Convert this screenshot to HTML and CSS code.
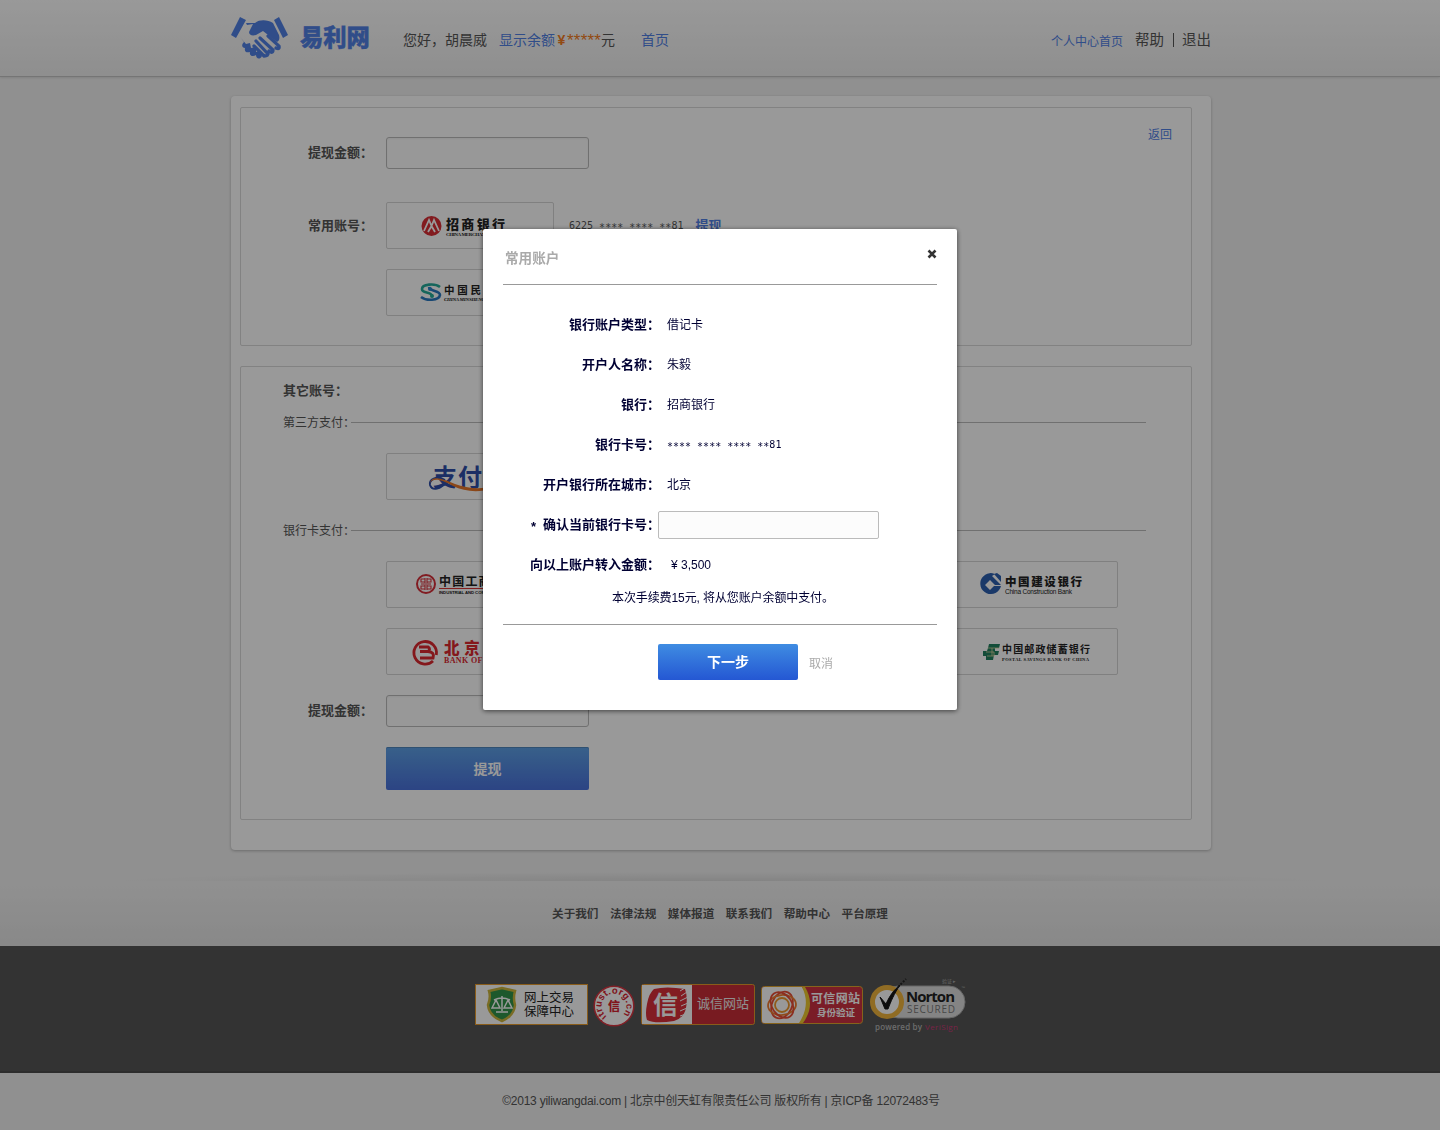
FILE: index.html
```html
<!DOCTYPE html>
<html lang="zh-CN">
<head>
<meta charset="utf-8">
<title>易利网</title>
<link rel="stylesheet" href="styles.css">
</head>
<body>
<header class="header">
  <div class="header-inner">
    <svg class="mark" width="58" height="44" viewBox="0 0 58 44">
      <path d="M9 1L15 4L5 22L0 19ZM48 1L43 4L52 22L57 19Z"/>
      <path d="M15 7L24 7C29 3 37 4 42 7L48 19C49 23 48 25 46 26L32 15L25 19C21 20 18 19 18 16L22 8L16 9Z"/>
      <path d="M9 21L13 26C10 29 11 32 14 32C13 36 16 37 19 36C18 40 22 41 25 39C25 43 29 44 31 40L28 35L25 36L25 31L20 32L19 27L15 28Z"/>
      <path class="fingers" d="M29 22L42 34M25 25L37 38M23 30L33 40M37 20L48 30Q49 34 45 32M42 34Q42 38 38 35M37 38Q36 41 32 39"/>
    </svg>
    <span class="brand">易利网</span>
    <span class="hello">您好，胡晨威</span>
    <span class="balance"><a>显示余额</a><b>¥</b><i>*****</i>元</span>
    <a class="home">首页</a>
    <nav class="user-nav"><a>个人中心首页</a><span>帮助</span><span class="bar"></span><span>退出</span></nav>
  </div>
</header>

<main class="sheet">
  <section class="box">
    <div class="row first"><span class="label">提现金额<em>：</em></span><span class="input"></span><a class="back">返回</a></div>
    <div class="row common"><span class="label">常用账号<em>：</em></span>
      <span class="card"><svg width="166" height="45" viewBox="0 0 166 45">
        <circle class="red" cx="44.5" cy="23" r="10"/><path class="cut" d="M37 28L42 17L44.5 23L47 17L52 28M41 29L44.5 23L48 29"/>
        <text class="kai" x="59" y="26" font-size="13" textLength="59">招商银行</text>
        <text class="rom" x="59" y="33" font-size="5" textLength="59">CHINA MERCHANTS BANK</text></svg></span>
      <span class="number">6225 <s>**** ****</s> <s>**</s>81</span><a class="take">提现</a></div>
    <div class="row second"><span class="label"></span>
      <span class="card"><svg width="166" height="45" viewBox="0 0 166 45">
        <path class="teal" d="M53 17C48 13 35 14 35 19C35 24 44 21 45 26"/><path class="sky" d="M34 27C39 31 52 31 53 25C53 20 43 22 42 17"/><circle cx="43" cy="19" r="2" fill="#2a86c8"/><circle cx="45" cy="26" r="2" fill="#25aa99"/>
        <text class="kai light" x="57" y="23.5" font-size="10.5" textLength="77">中国民生银行</text>
        <text class="rom slant" x="57" y="30.5" font-size="5" textLength="77">CHINA MINSHENG BANKING CORP.</text></svg></span></div>
  </section>

  <section class="box other">
    <h2>其它账号<em>：</em></h2>
    <div class="divider"><span>第三方支付<em>：</em></span><hr></div>
    <div class="cards">
      <span class="card"><svg width="166" height="45" viewBox="0 0 166 45">
        <text x="46" y="32" font-size="24" font-weight="700" fill="#2e4ea8" textLength="74">支付宝</text>
        <path d="M58 26C49 21 42 26 43 31C45 37 54 36 59 27" fill="none" stroke="#2e4ea8" stroke-width="2"/><path d="M43 29C45 20 58 26 68 30C84 36 103 36 120 27C104 39 82 40 66 32C56 26 46 23 43 29Z" fill="#e8772a"/></svg></span>
    </div>
    <div class="divider"><span>银行卡支付<em>：</em></span><hr></div>
    <div class="cards">
      <span class="card"><svg width="166" height="45" viewBox="0 0 166 45">
        <circle class="redline" cx="39" cy="22" r="9"/><path class="redline thin" d="M38 17H34V20H38M38 24H34V27H38M40 17H44V20H40M40 24H44V27H40M38 16V21M40 16V21M38 23V28M40 23V28M34 22H44"/>
        <text x="52" y="23.5" font-size="12" font-weight="700" textLength="78">中国工商银行</text><path d="M52 26.5H130" stroke="#d33"/>
        <text class="tiny" x="52" y="32" font-size="4.3" textLength="78">INDUSTRIAL AND COMMERCIAL BANK</text></svg></span>
      <span class="card"></span>
      <span class="card"></span>
      <span class="card"><svg width="166" height="45" viewBox="0 0 166 45">
        <path d="M47 14A10.5 10.5 0 1 0 50 24H43L39 28L34 23L39 18L44 23H50L41 14L44 12Z" fill="#2c5faf"/><path d="M43 12L50 20V14L46 11Z" fill="#2c5faf"/>
        <text x="54" y="24" font-size="11.5" font-weight="900" textLength="77">中国建设银行</text>
        <text x="54" y="31.5" font-size="6.5" textLength="67">China Construction Bank</text></svg></span>
      <span class="card"><svg width="166" height="45" viewBox="0 0 166 45">
        <path d="M46 32A11.3 11.3 0 1 1 49.3 26" fill="none" stroke="#dc2830" stroke-width="2.8"/><path d="M32 18H41Q44 20 41 22.5H33M41 22.5Q48 23 46 29H33" fill="none" stroke="#dc2830" stroke-width="3"/>
        <text class="kai crimson" x="57" y="24.5" font-size="15.5" textLength="76">北京银行</text>
        <text class="rom crimson" x="57" y="34" font-size="8" textLength="76">BANK OF BEIJING</text></svg></span>
      <span class="card"></span>
      <span class="card"></span>
      <span class="card"><svg width="166" height="45" viewBox="0 0 166 45">
        <path d="M38 15H49L48 19H44V22H48L47 26H43L42 31H35V27H32V22H36L37 19Z" fill="#218060"/><path d="M37 19H48M35 23H43V27H36M41 19V27" fill="none" stroke="#d8d6a0" stroke-width=".8"/>
        <text class="kai light" x="51" y="24" font-size="10" textLength="88">中国邮政储蓄银行</text>
        <text class="rom" x="51" y="31.5" font-size="4.5" textLength="87">POSTAL SAVINGS BANK OF CHINA</text></svg></span>
    </div>
    <div class="row amount"><span class="label">提现金额<em>：</em></span><span class="input"></span></div>
    <button class="withdraw">提现</button>
  </section>
</main>

<footer>
  <div class="shade"></div>
  <nav class="links"><a>关于我们</a><a>法律法规</a><a>媒体报道</a><a>联系我们</a><a>帮助中心</a><a>平台原理</a></nav>
  <div class="badges">
    <svg width="113" height="41" viewBox="0 0 113 41"><rect x=".5" y=".5" width="112" height="40" fill="#fff" stroke="#e59a2c"/>
      <path d="M14 7L27 4L40 7Q38 14 40 21Q39 32 27 37Q14 32 13 21Q16 14 14 7Z" fill="#31934a" stroke="#cbb53c" stroke-width="2.5"/>
      <path d="M27 12V27M21 28H33M19 16Q27 12 35 16M21 16L17 24H25ZM33 16L29 24H37Z" fill="none" stroke="#fff" stroke-width="1.5"/>
      <text x="49" y="18" font-size="12.5" textLength="50">网上交易</text><text x="49" y="32" font-size="12.5" textLength="50">保障中心</text></svg>
    <svg class="itrust" width="42" height="42" viewBox="0 0 42 42"><circle cx="21" cy="21" r="19.8" fill="#fff" stroke="#d93440" stroke-width="1.5"/>
      <path id="ring" d="M13.8 31.3A12.5 12.5 0 1 1 28.2 31.3" fill="none"/><text font-size="9.5" font-weight="700" fill="#d52230"><textPath href="#ring" textLength="60">itrust.org.cn</textPath></text>
      <text x="15" y="25.5" font-size="12" font-weight="900" fill="#d52230">信</text></svg>
    <svg width="114" height="41" viewBox="0 0 114 41"><rect x=".5" y=".5" width="113" height="40" rx="2" fill="#c92e38" stroke="#e59a2c"/><path d="M1 1H51V40H1Z" fill="#fff"/>
      <path d="M13 5Q25 2 44 5Q47 13 45 24Q43 34 33 37Q14 40 6 36Q4 30 6 20Q8 9 13 5Z" fill="#d9303a"/><text x="12" y="30" font-size="25" font-weight="700" fill="#fff">信</text>
      <path d="M39 7L44 4M40 12L46 8M39 17L47 13M40 22L47 19M39 27L46 24M39 32L45 30" stroke="#fff" stroke-width="1"/>
      <text x="56" y="24" font-size="13" fill="#eee" textLength="52">诚信网站</text></svg>
    <svg class="kexin" width="102" height="38" viewBox="0 0 102 38"><rect x=".5" y=".5" width="101" height="37" rx="3" fill="#cb3141" stroke="#dfa52e"/><path d="M3 1H41Q54 19 41 37H3Q1 37 1 35V3Q1 1 3 1Z" fill="#fff"/><path d="M41 1H44Q55 19 42 37H38Q50 19 41 1Z" fill="#edc82f"/>
      <g fill="none" stroke-width="1.8"><ellipse cx="21" cy="19" rx="10" ry="14" stroke="#e94d35" transform="rotate(25 21 19)"/><ellipse cx="21" cy="19" rx="10" ry="14" stroke="#ef7c2f" transform="rotate(85 21 19)"/><ellipse cx="21" cy="19" rx="10" ry="14" stroke="#e94d35" transform="rotate(145 21 19)"/><circle cx="21" cy="19" r="7" stroke="#ef9a30"/></g>
      <text x="50" y="17" font-size="12" font-weight="700" fill="#fff" textLength="49">可信网站</text><text x="56" y="30" font-size="9.5" font-weight="700" fill="#fff" textLength="38">身份验证</text></svg>
    <svg class="norton" width="98" height="56" viewBox="0 0 98 56"><rect x="13" y="8" width="83" height="32" rx="16" fill="#ddd" stroke="#aaa"/><circle cx="18" cy="24" r="14.5" fill="#fff" stroke="#f0b43c" stroke-width="5"/>
      <path d="M11 19L17 26C21 17 25 12 31 7C25 16 22 23 19 31H16Z" fill="#151515" stroke="#151515"/><path d="M29 9L37 1" stroke="#222" stroke-width="2" stroke-dasharray="2 1.5"/>
      <text class="open" x="37" y="23.5" font-size="15" font-weight="700" textLength="49">Norton</text><text class="open" x="38" y="35" font-size="10" fill="#777" textLength="48">SECURED</text>
      <text x="73" y="5" font-size="5" fill="#aaa">验证 ▸</text><text x="92" y="11" font-size="4" fill="#aaa">™</text>
      <text class="open" x="6" y="52" font-size="8" font-weight="600" fill="#b5b5b5" textLength="47">powered by</text><text class="open" x="56" y="52" font-size="8" fill="#a82960" textLength="33">VeriSign</text></svg>
  </div>
  <p class="copyright">©2013 yiliwangdai.com | 北京中创天虹有限责任公司 版权所有 | 京ICP备 12072483号</p>
</footer>

<div class="overlay">
  <div class="modal">
    <div class="modal-head"><h3>常用账户</h3><svg width="10" height="10" viewBox="0 0 10 10"><path d="M1.5 1.5L8.5 8.5M8.5 1.5L1.5 8.5"/></svg></div>
    <dl>
      <dt>银行账户类型<em>：</em></dt><dd>借记卡</dd>
      <dt>开户人名称<em>：</em></dt><dd>朱毅</dd>
      <dt>银行<em>：</em></dt><dd>招商银行</dd>
      <dt>银行卡号<em>：</em></dt><dd class="mono"><s>**** **** **** **</s>81</dd>
      <dt>开户银行所在城市<em>：</em></dt><dd>北京</dd>
      <dt><s>*</s>确认当前银行卡号<em>：</em></dt><dd><span class="field"></span></dd>
      <dt>向以上账户转入金额<em>：</em></dt><dd class="money">¥ 3,500</dd>
    </dl>
    <p class="note">本次手续费15元, 将从您账户余额中支付。</p>
    <div class="actions"><button class="next">下一步</button><a>取消</a></div>
  </div>
</div>
</body>
</html>
```
FILE: styles.css
```css
* { box-sizing: border-box; }
body { margin: 0; height: 1130px; overflow: hidden; background: #f0f0f0; color: #555; font: 12px/16px "Liberation Sans", "Noto Sans CJK SC", sans-serif; }
button { font-family: inherit; border: 0; padding: 0; }
a { color: #5080e4; }
em { font-style: normal; }
s { text-decoration: none; position: relative; top: 2px; }
svg { display: block; flex: none; }
svg text { white-space: pre; fill: #222; }
svg text[fill="#fff"] { fill: #fff; }
svg text[fill="#eee"] { fill: #eee; }
svg text[fill="#777"] { fill: #777; }
svg text[fill="#aaa"] { fill: #aaa; }
svg text[fill="#b5b5b5"] { fill: #b5b5b5; }
svg text[fill="#a82960"] { fill: #c83a78; }
svg text[fill="#d52230"] { fill: #d52230; }
svg text[fill="#2e4ea8"] { fill: #2e4ea8; }

.header { height: 77px; background: linear-gradient(#fff, #eee); border-bottom: 1px solid #c4c4c4; box-shadow: 0 1px 2px rgba(0,0,0,.1); }
.header-inner { width: 980px; height: 76px; margin-left: 231px; display: flex; align-items: center; font-size: 14px; padding-top: 4px; white-space: nowrap; }
.mark { margin-top: -4px; fill: #5080e4; }
.fingers { fill: none; stroke: #5080e4; stroke-width: 3.2; stroke-linecap: round; }
.brand { width: 70px; margin: -5px 0 0 11px; color: #5080e4; font-size: 23.3px; font-weight: 900; -webkit-text-stroke: .4px #5080e4; }
.hello { margin-left: 33px; width: 84px; }
.balance { margin-left: 12px; width: 116px; display: flex; align-items: center; }
.balance a { width: 57px; }
.balance b { color: #f47c20; width: 11px; text-align: center; }
.balance i { color: #f47c20; font-style: normal; font-size: 17px; width: 34px; letter-spacing: .2px; line-height: 16px; padding-top: 2px; }
.home { margin-left: 26px; }
.user-nav { margin-left: auto; display: flex; align-items: center; font-size: 14.5px; }
.user-nav a { font-size: 12px; margin: 3px 12px 0 0; }
.bar { width: 1px; height: 14px; background: #555; margin: 0 8px 0 9px; }

.sheet { width: 980px; height: 754px; margin: 19px 0 0 231px; padding: 11px 19px 0 9px; background: #fff; border-radius: 4px; box-shadow: 0 1px 3px rgba(0,0,0,.25); }
.box { height: 239px; border: 1px solid #d9d9d9; border-radius: 2px; padding-top: 29px; }
.other { height: 454px; margin-top: 20px; padding-top: 16px; }
.row { display: flex; align-items: center; }
.label { width: 145px; padding-left: 67px; font-size: 13px; font-weight: 700; white-space: nowrap; }
.input { width: 203px; height: 32px; border: 1px solid #bbb; border-radius: 3px; background: #fdfdfd; box-shadow: inset 0 1px 2px rgba(0,0,0,.04); }
.back { margin: -37px 19px 0 auto; }
.common { margin-top: 33px; }
.second { margin-top: 20px; }
.card { width: 168px; height: 47px; border: 1px solid #d5d5d5; border-radius: 2px; overflow: hidden; }
.number, .mono { font: 10px/16px "DejaVu Sans Mono", monospace; }
.number { margin-left: 15px; }
.take { margin-left: 12px; font-size: 13px; font-weight: 700; }
.red { fill: #d92d35; }
.cut { fill: none; stroke: #fff; stroke-width: 1.8; }
.redline { fill: none; stroke: #d7303a; stroke-width: 2; }
.thin { stroke-width: 1.1; }
.kai { font-family: "Noto Sans CJK SC", sans-serif; font-weight: 900; }
.light { font-weight: 700; }
.rom { font-family: "Liberation Serif", serif; font-weight: 700; }
.open { font-family: "Open Sans", sans-serif; }
.slant { font-style: italic; }
.tiny { font-weight: 700; }
.teal, .sky { fill: none; stroke: #25aa99; stroke-width: 2.6; }
.sky { stroke: #2a78c0; }
svg .crimson { fill: #dc2830; }
h2 { margin: 0 0 0 42px; font-size: 13px; line-height: 16px; }
.divider { display: flex; align-items: center; height: 16px; margin: 15px 45px 0 42px; }
.divider span { width: 68px; white-space: nowrap; padding-top: 1px; }
.divider hr { flex: 1; margin: 0; border: 0; border-top: 1px solid #bbb; }
.cards { display: grid; grid-template-columns: repeat(4, 168px); gap: 20px; margin: 23px 0 0 145px; }
.cards + .divider { margin-top: 22px; }
.amount { margin-top: 20px; }
.withdraw { display: block; width: 203px; height: 43px; margin: 20px 0 0 145px; padding-bottom: 2px; border-radius: 2px; color: #fff; font-size: 14px; font-weight: 700; background: linear-gradient(#5ea1e6, #4a72dc); box-shadow: inset 0 1px #5187bd; }

.shade { height: 9px; margin-top: 22px; background: radial-gradient(ellipse 600px 9px at 50% 100%, #dcdcdc, rgba(240,240,240,0)); }
.links { height: 65px; display: flex; justify-content: center; align-items: center; gap: 11.5px; background: linear-gradient(#f1f1f1, #e4e4e4); }
.links a { color: #555; font-size: 11.6px; font-weight: 700; }
.badges { height: 127px; padding: 38px 0 0 475px; display: flex; background: #555; border-bottom: 2px solid #4c4c4c; }
.itrust { margin: 1px 6px 0 5px; }
.kexin { margin: 2px 6px 0; }
.norton { margin-top: -6px; }
.copyright { margin: 20px 0 0; padding-left: 2px; text-align: center; letter-spacing: -.23px; }

.overlay { position: fixed; inset: 0; background: rgba(0,0,0,.4); }
.modal { position: absolute; left: 483px; top: 229px; width: 474px; height: 481px; padding: 0 20px; background: #fff; border-radius: 2px; box-shadow: 0 1px 5px rgba(0,0,0,.6); color: #003; }
.modal-head { height: 56px; display: flex; justify-content: space-between; border-bottom: 1px solid #999; }
.modal-head h3 { margin: 21px 0 0 2px; font-size: 13.6px; line-height: 18px; color: #aaa; }
.modal-head path { stroke: #333; stroke-width: 2.6; }
.modal-head svg { margin: 20px 0 0; }
dl { margin: 20px 0 0; display: grid; grid-template-columns: 157px 1fr; grid-auto-rows: 40px; align-items: center; }
dt { font-size: 13px; font-weight: 700; text-align: right; white-space: nowrap; }
dt s { margin-right: 7px; }
dd { margin: 0 0 0 7px; }
.field { display: block; width: 221px; height: 28px; margin: 0 0 0 -9px; position: relative; border: 1px solid #bbb; border-radius: 2px; background: #fcfcfc; }
dd.money { margin-left: 11px; }
.note { margin: 5px 0 0; height: 35px; padding-left: 109px; border-bottom: 1px solid #999; white-space: nowrap; letter-spacing: -.1px; }
.actions { display: flex; align-items: center; padding: 19px 0 0 155px; }
.next { width: 140px; height: 36px; padding-bottom: 2px; border-radius: 2px; color: #fff; font-size: 14px; font-weight: 700; background: linear-gradient(#3f8ce2, #2457d3); }
.actions a { margin: 3px 0 0 11px; color: #aaa; }
```
